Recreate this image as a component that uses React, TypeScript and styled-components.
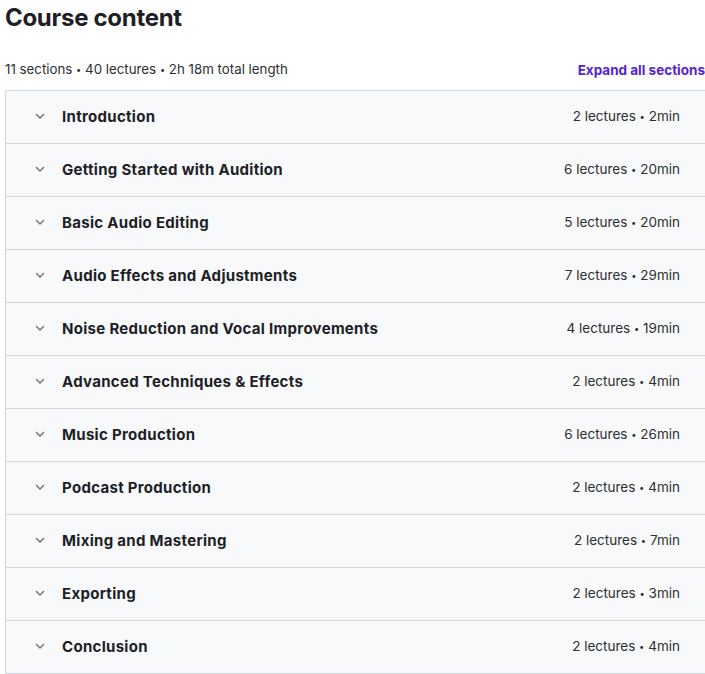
import styled, { createGlobalStyle } from "styled-components"

const GlobalStyle = createGlobalStyle`
    html, body {
    margin: 0;
    padding: 0;
    background: #ffffff;
    font-family: Inter, "Noto Sans", Arial, sans-serif;
    color: #2d2f31;
    }
`

const sections = [
    { title: "Introduction", lectures: 2, length: "2min" },
    { title: "Getting Started with Audition", lectures: 6, length: "20min" },
    { title: "Basic Audio Editing", lectures: 5, length: "20min" },
    { title: "Audio Effects and Adjustments", lectures: 7, length: "29min" },
    { title: "Noise Reduction and Vocal Improvements", lectures: 4, length: "19min" },
    { title: "Advanced Techniques & Effects", lectures: 2, length: "4min" },
    { title: "Music Production", lectures: 6, length: "26min" },
    { title: "Podcast Production", lectures: 2, length: "4min" },
    { title: "Mixing and Mastering", lectures: 2, length: "7min" },
    { title: "Exporting", lectures: 2, length: "3min" },
    { title: "Conclusion", lectures: 2, length: "4min" },
]

const Chevron = () => (
    <svg width="12" height="12" viewBox="0 0 12 12" fill="none">
        <path d="M2.5 4.5 L6 8 L9.5 4.5" stroke="#6a6f73" strokeWidth="1.4" strokeLinecap="round" strokeLinejoin="round" />
    </svg>
)

const App = () => {
    return (
        <>
            <GlobalStyle />
            <Wrapper>
                <Title>Course content</Title>

                <Summary>
                    <span>11 sections <Dot>•</Dot> 40 lectures <Dot>•</Dot> 2h 18m total length</span>
                    <ExpandButton>Expand all sections</ExpandButton>
                </Summary>

                <Accordion>
                    {sections.map((s) => (
                        <SectionRow key={s.title}>
                            <Left>
                                <Chevron />
                                <SectionTitle>{s.title}</SectionTitle>
                            </Left>
                            <Meta>{s.lectures} lectures <Dot>•</Dot> {s.length}</Meta>
                        </SectionRow>
                    ))}
                </Accordion>
            </Wrapper>
        </>
    )
}

const Wrapper = styled.div`
    width: 700px;
    padding: 3px 0 0 5px;
`

const Title = styled.h2`
    font-size: 24px;
    font-weight: 700;
    line-height: 29px;
    margin: 0;
    letter-spacing: -0.3px;
    color: #1d1e26;
`

const Summary = styled.div`
    display: flex;
    justify-content: space-between;
    align-items: center;
    margin-top: 27px;
    height: 20px;
    font-size: 13.3px;
    color: #2d2f31;
`

const Dot = styled.span`
    font-size: 0.7em;
    vertical-align: 1px;
`

const ExpandButton = styled.button`
    border: none;
    background: none;
    padding: 0;
    font-family: inherit;
    font-size: 13.5px;
    font-weight: 700;
    color: #5624d0;
    cursor: pointer;
    margin-top: 2px;
`

const Accordion = styled.div`
    margin-top: 11px;
    border: 1px solid #d1d7dc;
    border-right: none;
`

const SectionRow = styled.div`
    display: flex;
    justify-content: space-between;
    align-items: center;
    height: 52px;
    padding: 0 25px 2px 28px;
    box-sizing: border-box;
    background: #f7f9fa;

    & + & {
    border-top: 1px solid #d1d7dc;
    height: 53px;
    }
`

const Left = styled.div`
    display: flex;
    align-items: center;
    gap: 16px;
`

const SectionTitle = styled.span`
    font-size: 15px;
    font-weight: 700;
    letter-spacing: 0.3px;
    color: #1d1e26;
`

const Meta = styled.span`
    font-size: 13.5px;
    color: #2d2f31;
`

export default App
